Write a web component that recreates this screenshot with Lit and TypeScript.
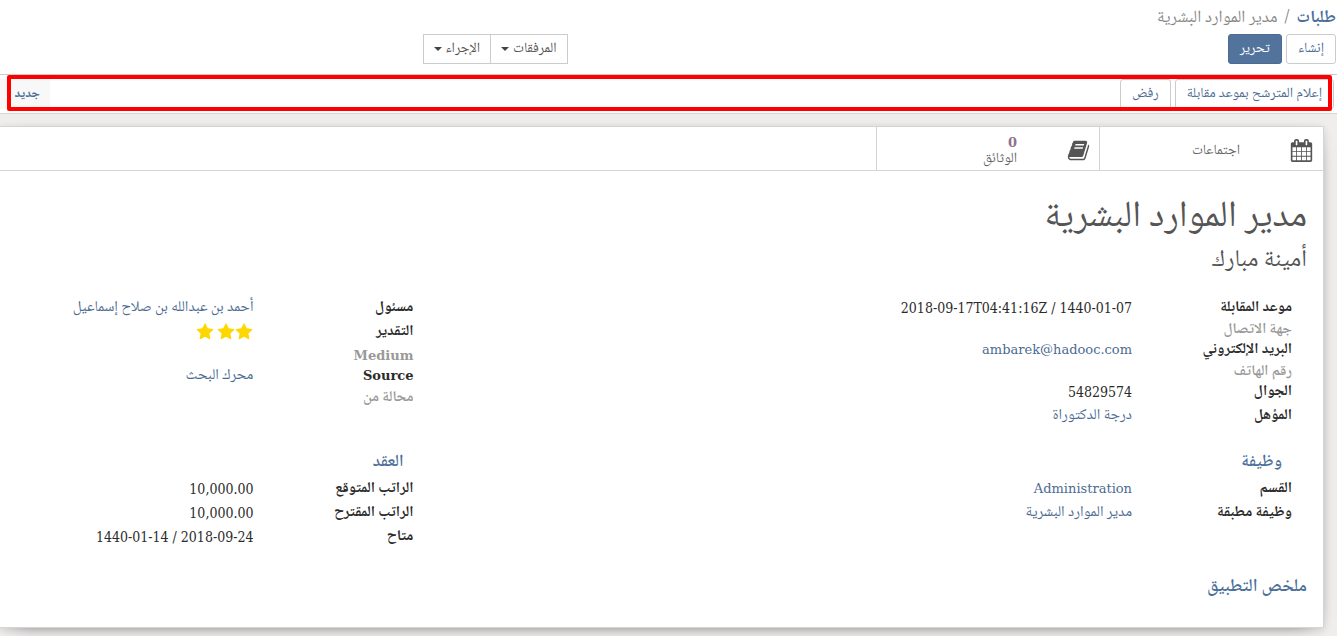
import { LitElement, html, svg, css, nothing } from "lit";
import { customElement } from "lit/decorators.js";
import { classMap } from "lit/directives/class-map.js";

const CALENDAR = "M192 1664h288v-288h-288v288zm352 0h320v-288h-320v288zm-352-352h288v-320h-288v320zm352 0h320v-320h-320v320zm-352-384h288v-288h-288v288zm736 736h320v-288h-320v288zm-384-736h320v-288h-320v288zm768 736h288v-288h-288v288zm-384-352h320v-320h-320v320zm-352-864v-288q0-13-9.5-22.5t-22.5-9.5h-64q-13 0-22.5 9.5t-9.5 22.5v288q0 13 9.5 22.5t22.5 9.5h64q13 0 22.5-9.5t9.5-22.5zm736 864h288v-320h-288v320zm-384-384h320v-288h-320v288zm384 0h288v-288h-288v288zm32-480v-288q0-13-9.5-22.5t-22.5-9.5h-64q-13 0-22.5 9.5t-9.5 22.5v288q0 13 9.5 22.5t22.5 9.5h64q13 0 22.5-9.5t9.5-22.5zm384-64v1280q0 52-38 90t-90 38h-1408q-52 0-90-38t-38-90v-1280q0-52 38-90t90-38h128v-96q0-66 47-113t113-47h64q66 0 113 47t47 113v96h384v-96q0-66 47-113t113-47h64q66 0 113 47t47 113v96h128q52 0 90 38t38 90z";
const BOOK = "M1703 478q40 57 18 129l-275 906q-19 64-76.5 107.5t-122.5 43.5h-923q-77 0-148.5-53.5t-99.5-131.5q-24-67-2-127 0-4 3-27t4-37q1-8-3-21.5t-3-19.5q2-11 8-21t16.5-23.5 16.5-23.5q23-38 45-91.5t30-91.5q3-10 .5-30t-.5-28q3-11 17-28t17-23q21-36 42-92t25-90q1-9-2.5-32t.5-28q4-13 22-30.5t22-22.5q19-26 42.5-84.5t27.5-96.5q1-8-3-25.5t-2-26.5q2-8 9-18t18-23 17-21q8-12 16.5-30.5t15-35 16-36 19.5-32 26.5-23.5 36-11.5 47.5 5.5l-1 3q38-9 51-9h761q74 0 114 56t18 130l-274 906q-36 119-71.5 153.5t-128.5 34.5h-869q-27 0-38 15-11 16-1 43 24 70 144 70h923q29 0 56-15.5t35-41.5l300-987q7-22 5-57 38 15 59 43zm-1064 2q-4 13 2 22.5t20 9.5h608q13 0 25.5-9.5t16.5-22.5l21-64q4-13-2-22.5t-20-9.5h-608q-13 0-25.5 9.5t-16.5 22.5zm-83 256q-4 13 2 22.5t20 9.5h608q13 0 25.5-9.5t16.5-22.5l21-64q4-13-2-22.5t-20-9.5h-608q-13 0-25.5 9.5t-16.5 22.5z";
const STAR = "M1728 647q0 22-26 48l-363 354 86 500q1 7 1 20 0 21-10.5 35.5t-30.5 14.5q-19 0-40-12l-449-236-449 236q-22 12-40 12-21 0-31.5-14.5t-10.5-35.5q0-6 2-20l86-500-364-354q-25-27-25-48 0-37 56-46l502-73 225-455q19-41 49-41t49 41l225 455 502 73q56 9 56 46z";

const icon = (d: string, cls: string) =>
  html`<svg class=${cls} viewBox="0 0 1792 1792" aria-hidden="true">${svg`<path d=${d} />`}</svg>`;

type Kind = "link" | "mail" | "number" | "stars";
interface Field { label: string; value?: string; kind?: Kind; latin?: boolean }

const APPLICANT: Field[] = [
  { label: "موعد المقابلة", value: "2018-09-17T04:41:16Z / 1440-01-07", kind: "number" },
  { label: "جهة الاتصال" },
  { label: "البريد الإلكتروني", value: "ambarek@hadooc.com", kind: "mail" },
  { label: "رقم الهاتف" },
  { label: "الجوال", value: "54829574", kind: "number" },
  { label: "المؤهل", value: "درجة الدكتوراة", kind: "link" },
];
const FOLLOW_UP: Field[] = [
  { label: "مسئول", value: "أحمد بن عبدالله بن صلاح إسماعيل", kind: "link" },
  { label: "التقدير", kind: "stars", value: "3" },
  { label: "Medium", latin: true },
  { label: "Source", latin: true, value: "محرك البحث", kind: "link" },
  { label: "محالة من" },
];
const JOB: Field[] = [
  { label: "القسم", value: "Administration", kind: "mail" },
  { label: "وظيفة مطبقة", value: "مدير الموارد البشرية", kind: "link" },
];
const CONTRACT: Field[] = [
  { label: "الراتب المتوقع", value: "10,000.00", kind: "number" },
  { label: "الراتب المقترح", value: "10,000.00", kind: "number" },
  { label: "متاح", value: "1440-01-14 / 2018-09-24", kind: "number" },
];

@customElement("field-group")
class FieldGroup extends LitElement {
  static properties = { heading: {}, fields: { attribute: false } };
  declare heading: string;
  declare fields: Field[];

  static styles = css`
    :host { display: block; }
    h2 {
      margin: 0;
      padding: 0 10px;
      font-size: 17px;
      font-weight: 600;
      line-height: 28px;
      color: #4c6f9a;
    }
    dl { margin: 0; }
    .row {
      display: grid;
      grid-template-columns: 160px 1fr;
      line-height: 24px;
      white-space: nowrap;
    }
    .row.empty { line-height: 16px; padding-top: 2px; }
    .row.rating { padding-bottom: 2px; }
    dt { font-weight: 700; color: #2b2b2b; }
    .empty dt { color: #999; font-weight: 600; }
    dd { margin: 0; color: #2b2b2b; }
    a { color: #4c6b92; text-decoration: none; }
    .latin { font-family: "DejaVu Serif", serif; font-size: 13px; }
    .number { font-family: "DejaVu Serif Condensed", "DejaVu Serif", serif; font-size: 14px; }
    .stars { display: flex; align-items: center; height: 24px; }
    .star { width: 18px; height: 18px; fill: #ffd700; }
    .star:last-child { margin-inline-start: 3px; }
  `;

  private value(f: Field) {
    switch (f.kind) {
      case "stars":
        return html`<span class="stars" role="img" aria-label=${f.value!}>${[1, 2, 3].map(() => icon(STAR, "star"))}</span>`;
      case "mail":
        return html`<a href="#" dir="ltr">${f.value}</a>`;
      case "link":
        return html`<a href="#">${f.value}</a>`;
      case "number":
        return html`<bdi dir="ltr">${f.value}</bdi>`;
      default:
        return nothing;
    }
  }

  render() {
    return html`
      ${this.heading ? html`<h2>${this.heading}</h2>` : nothing}
      <dl>
        ${this.fields.map((f) => html`
          <div class=${classMap({ row: true, empty: !f.value, rating: f.kind === "stars" })}>
            <dt class=${classMap({ latin: !!f.latin })}>${f.label}</dt>
            <dd class=${classMap({ latin: f.kind === "mail", number: f.kind === "number" })}>${this.value(f)}</dd>
          </div>`)}
      </dl>`;
  }
}

@customElement("app-root")
class AppRoot extends LitElement {
  static styles = css`
    :host {
      display: block;
      direction: rtl;
      min-height: 100vh;
      background: #f0eded;
      color: #555;
      font-family: "Noto Naskh Arabic", "DejaVu Serif", serif;
      font-size: 15px;
      line-height: 24px;
      overflow: hidden;
    }
    * { box-sizing: border-box; }
    button { font: inherit; cursor: pointer; margin: 0; }
    a { text-decoration: none; }

    .panel { background: #fff; border-bottom: 1px solid #ccc; padding: 7px 1px 10px; }
    .crumbs { display: flex; gap: 7px; font-size: 17px; line-height: 24px; color: #888; }
    .crumbs a { color: #4c6f9a; font-weight: 700; }
    .bar { display: grid; grid-template-columns: 1fr 1fr; padding-top: 3px; }
    .actions { display: flex; gap: 4px; }
    .menus { display: flex; padding-inline-start: 101px; }
    .btn {
      height: 30px;
      padding: 0 11px;
      border: 1px solid #ccc;
      border-radius: 3px;
      background: #fff;
      color: #4c6b92;
      font-size: 14px;
      line-height: 24px;
      white-space: nowrap;
    }
    .primary { background: #52739b; border-color: #4c6b92; color: #fff; }
    .menu { display: flex; align-items: center; gap: 4px; padding: 0 10px; border-radius: 0; color: #555; }
    .menu + .menu { margin-inline-start: -1px; }
    .menu::after { content: ""; border: 4px solid transparent; border-top-color: #444; border-bottom: 0; }

    .status {
      position: relative;
      display: flex;
      justify-content: space-between;
      height: 39px;
      padding: 4px 3px 4px 0;
      background: #fff;
      border-bottom: 1px solid #d5d5d5;
    }
    .stage {
      width: 50px;
      padding: 0 10px;
      border: 0;
      background: #f8f8f8;
      color: #4c6f9a;
      font-weight: 700;
      font-size: 13px;
      line-height: 24px;
      text-align: start;
    }
    .marker {
      position: absolute;
      inset: 0 5px 2px 7px;
      border: 4px solid #f00;
      border-radius: 2px;
      pointer-events: none;
    }

    .sheet {
      margin: 12px 0 8px;
      margin-inline-start: 13px;
      background: #fff;
      border: 1px solid #d5d5d5;
      border-left: 0;
      box-shadow: 0 5px 20px -15px #000, 0 2px 8px rgba(0, 0, 0, 0.12);
    }
    .stats { display: flex; height: 44px; padding-inline-start: 1px; border-bottom: 1px solid #d5d5d5; }
    .stat {
      display: grid;
      grid-template-columns: 82px 1fr;
      align-items: center;
      width: 223px;
      padding: 4px 0 0;
      border: 0;
      border-left: 1px solid #d5d5d5;
      background: none;
      color: #666;
      font-size: 14px;
      line-height: 16px;
      text-align: start;
    }
    .stat-icon { width: 23px; height: 23px; margin-inline-start: 9px; fill: #555; }
    .count { display: block; font-family: "DejaVu Serif", serif; font-size: 13px; font-weight: 700; color: #8f7190; line-height: 16px; }

    .body { padding: 19px 16px 24px; }
    h1 { margin: 0; font-size: 37px; font-weight: 400; line-height: 55px; }
    .name { margin: 0; font-size: 24px; font-weight: 400; line-height: 32px; }
    .groups { display: grid; grid-template-columns: 68fr 32fr; padding-inline-start: 15px; margin-inline-end: -16px; }
    .details { margin-top: 19px; }
    .terms { margin-top: 21px; }
    .summary { margin: 22px 0 0; font-size: 18px; font-weight: 600; line-height: 32px; color: #4c6f9a; }
  `;

  render() {
    return html`
      <header class="panel">
        <nav class="crumbs"><a href="#">طلبات</a><span>/</span><span>مدير الموارد البشرية</span></nav>
        <div class="bar">
          <div class="actions">
            <button class="btn">إنشاء</button>
            <button class="btn primary">تحرير</button>
          </div>
          <div class="menus">
            <button class="btn menu">المرفقات</button>
            <button class="btn menu">الإجراء</button>
          </div>
        </div>
      </header>
      <div class="status">
        <div class="actions">
          <button class="btn">إعلام المترشح بموعد مقابلة</button>
          <button class="btn">رفض</button>
        </div>
        <button class="stage">جديد</button>
        <div class="marker"></div>
      </div>
      <main class="sheet">
        <div class="stats">
          <button class="stat">${icon(CALENDAR, "stat-icon")}<span>اجتماعات</span></button>
          <button class="stat">${icon(BOOK, "stat-icon")}<span><span class="count">0</span>الوثائق</span></button>
        </div>
        <div class="body">
          <h1>مدير الموارد البشرية</h1>
          <p class="name">أمينة مبارك</p>
          <div class="groups details">
            <field-group .fields=${APPLICANT}></field-group>
            <field-group .fields=${FOLLOW_UP}></field-group>
          </div>
          <div class="groups terms">
            <field-group heading="وظيفة" .fields=${JOB}></field-group>
            <field-group heading="العقد" .fields=${CONTRACT}></field-group>
          </div>
          <h2 class="summary">ملخص التطبيق</h2>
        </div>
      </main>`;
  }
}
